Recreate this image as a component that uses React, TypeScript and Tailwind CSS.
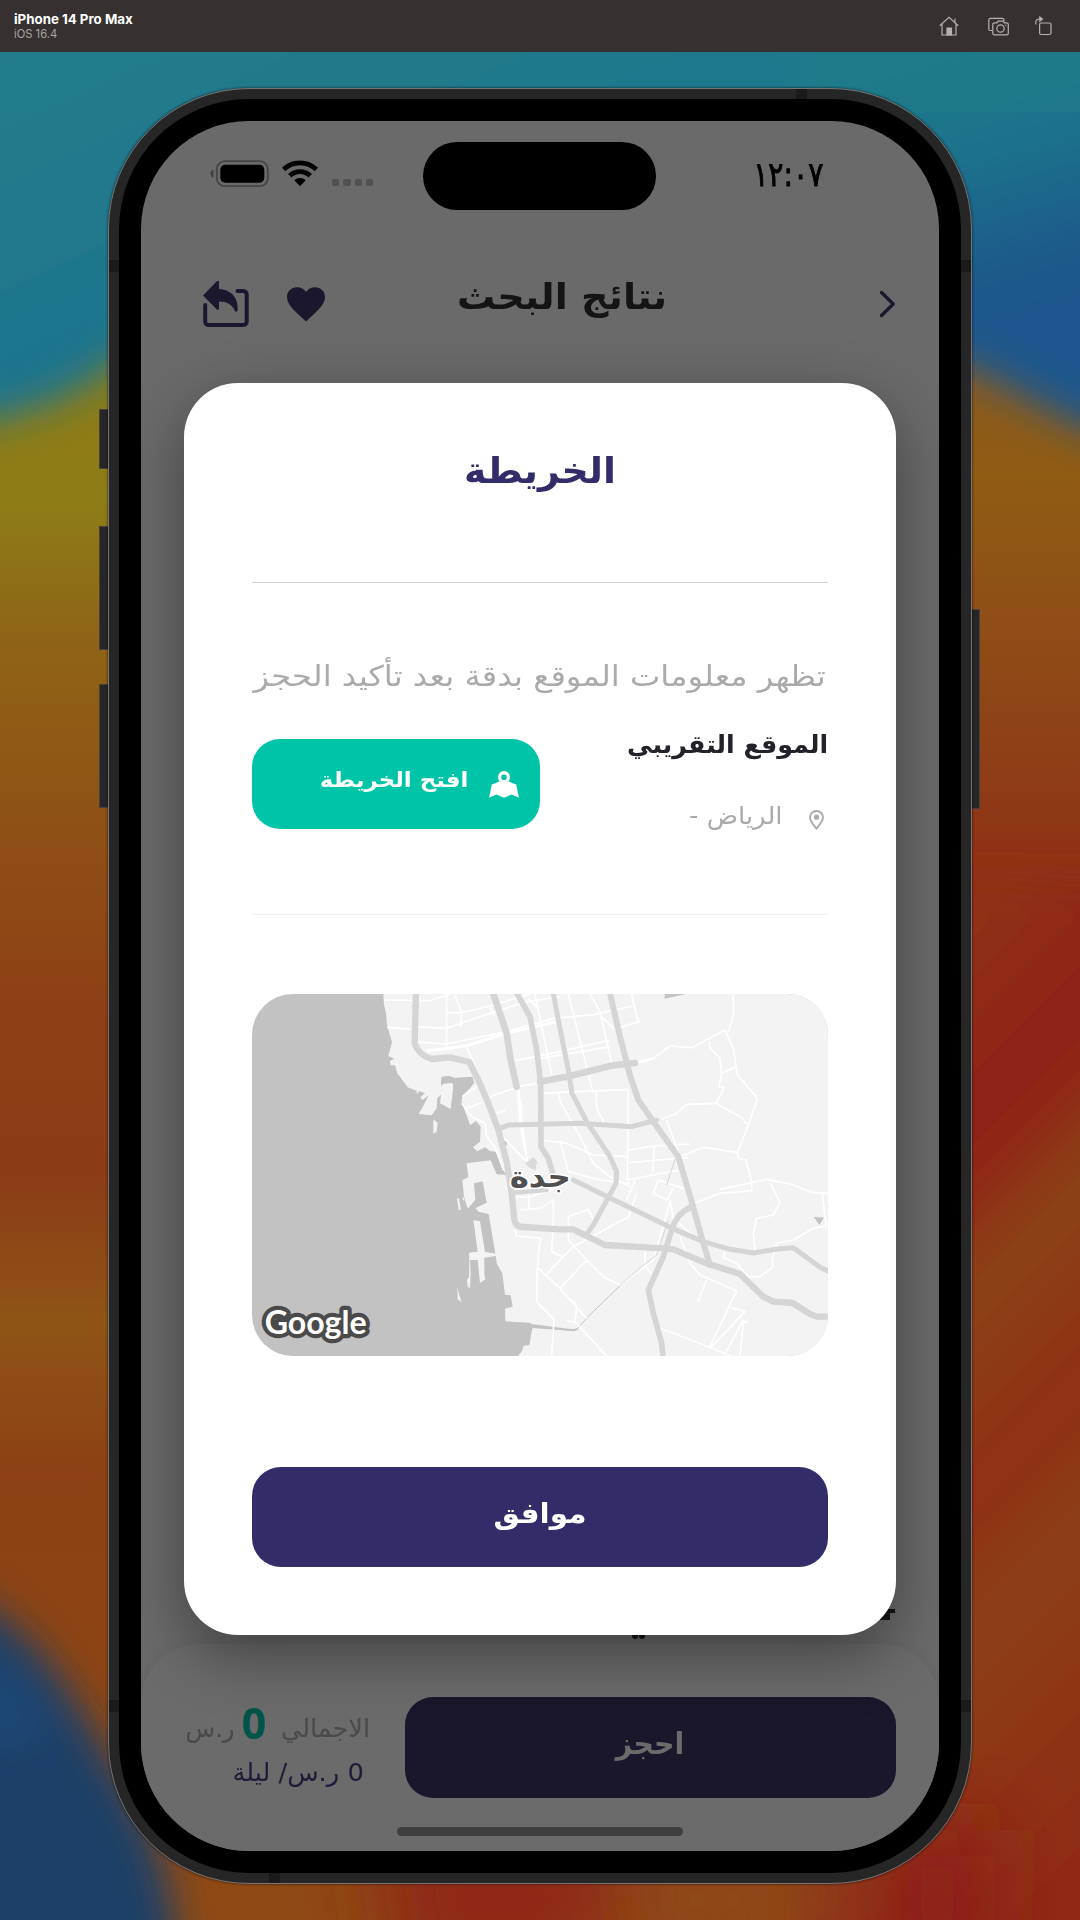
import React from "react";

function Wallpaper() {
  return (
    <svg className="absolute inset-0 h-full w-full" viewBox="0 52 1080 1868" preserveAspectRatio="none">
      <defs>
        <filter id="soft" x="-40%" y="-40%" width="180%" height="180%"><feGaussianBlur stdDeviation="40" /></filter>
        <filter id="mid" x="-30%" y="-30%" width="160%" height="160%"><feGaussianBlur stdDeviation="19" /></filter>
        <linearGradient id="base" x1="0" y1="0" x2="0" y2="1">
          <stop offset="0" stopColor="#8f7716" />
          <stop offset="0.24" stopColor="#8d7d17" />
          <stop offset="0.31" stopColor="#8f6516" />
          <stop offset="0.40" stopColor="#8f5316" />
          <stop offset="0.51" stopColor="#8e4015" />
          <stop offset="0.60" stopColor="#8b3c16" />
          <stop offset="0.68" stopColor="#8f5416" />
          <stop offset="0.76" stopColor="#8d4114" />
          <stop offset="1" stopColor="#8f4a14" />
        </linearGradient>
        <linearGradient id="right" gradientUnits="userSpaceOnUse" x1="0" y1="400" x2="0" y2="900">
          <stop offset="0" stopColor="#8c5b1c" />
          <stop offset="0.15" stopColor="#8f5c14" />
          <stop offset="0.4" stopColor="#8f5016" />
          <stop offset="0.7" stopColor="#8e4016" />
          <stop offset="0.9" stopColor="#8f3317" />
          <stop offset="1" stopColor="#8f3017" />
        </linearGradient>
        <linearGradient id="bands" gradientUnits="userSpaceOnUse" x1="1026" y1="880" x2="1561" y2="1415">
          <stop offset="0" stopColor="#8f3017" />
          <stop offset="0.17" stopColor="#8f2116" />
          <stop offset="0.24" stopColor="#8e2917" />
          <stop offset="0.33" stopColor="#8c4316" />
          <stop offset="0.40" stopColor="#8d3c16" />
          <stop offset="0.53" stopColor="#8f2e17" />
          <stop offset="0.65" stopColor="#8c4015" />
          <stop offset="0.80" stopColor="#8e3516" />
          <stop offset="0.98" stopColor="#8f2b17" />
        </linearGradient>
        <linearGradient id="sky" gradientUnits="userSpaceOnUse" x1="0" y1="0" x2="200" y2="440">
          <stop offset="0" stopColor="#267d8d" />
          <stop offset="0.5" stopColor="#20788d" />
          <stop offset="1" stopColor="#1b718f" />
        </linearGradient>
        <linearGradient id="skyRight" gradientUnits="userSpaceOnUse" x1="960" y1="60" x2="1040" y2="340">
          <stop offset="0" stopColor="#1c7a8b" />
          <stop offset="0.35" stopColor="#1d718b" />
          <stop offset="0.75" stopColor="#1b588b" />
          <stop offset="1" stopColor="#1b578c" />
        </linearGradient>
      </defs>
      <rect y="52" width="1080" height="1868" fill="url(#base)" />
      <rect x="540" y="300" width="540" height="1300" fill="url(#right)" />
      <rect x="780" y="880" width="400" height="1200" fill="url(#bands)" filter="url(#mid)" />
      <g filter="url(#soft)">
        <path d="M370 1820 L630 1820 L600 1980 L400 1980Z" fill="#8f2616" />
        <path d="M640 1820 L800 1820 L790 1980 L640 1980Z" fill="#8f4613" />
        <path d="M880 1830 L1000 1830 L990 1980 L880 1980Z" fill="#8f1f16" />
      </g>
      <g filter="url(#mid)">
        <path d="M-80 0 H900 V350 L500 300 L130 352 C85 390 50 415 -80 432Z" fill="url(#sky)" />
        <path d="M800 -60 H1160 V450 L1080 426 L970 368 L800 330Z" fill="url(#skyRight)" />
      </g>
      <rect y="52" width="1080" height="60" fill="#1f7b8c" opacity="0.5" />
      <g filter="url(#mid)">
        <path d="M-80 1582 C20 1600 65 1680 105 1750 C135 1800 175 1850 180 1980 H-80Z" fill="#1d4068" />
        <path d="M-80 1640 L30 1680 L50 1740 L-80 1760Z" fill="#1d4676" />
      </g>
    </svg>
  );
}

function TitleBar() {
  return (
    <header className="relative flex h-[52px] items-center justify-between bg-[#363130] pl-[14px] pr-[28px]">
      <div className="pt-[1px] font-['Inter']">
        <div className="text-[13.300px] font-bold leading-[15px] text-white">iPhone 14 Pro Max</div>
        <div className="text-[11.200px] leading-[14px] text-[#a9a6a5]">iOS 16.4</div>
      </div>
      <div className="flex items-center text-[#b5b2b1]">
        <svg className="h-[20px] w-[20px]" viewBox="0 0 20 20" fill="none" stroke="currentColor" strokeWidth="1.2">
          <path d="M.7 9.7 10 1.2l9.3 8.5M3 8v11h14V8M16 6.5V2.7" />
          <path d="M8 19v-7h4.500v7z" fill="currentColor" />
        </svg>
        <svg className="ml-[29px] h-[19px] w-[22px]" viewBox="0 0 22 19" fill="none" stroke="currentColor" strokeWidth="1.2">
          <path d="M4 13.500H2.200A1.500 1.500 0 0 1 .8 12V3A1.700 1.700 0 0 1 2.500 1.300h12A1.700 1.700 0 0 1 16 3v1" />
          <path d="M6.500 5.800h2.300l1.200-1.700h5.200l1.200 1.700h2.200a1.700 1.700 0 0 1 1.700 1.700v8.700a1.700 1.700 0 0 1-1.700 1.700H6.500a1.700 1.700 0 0 1-1.700-1.700V7.500a1.700 1.700 0 0 1 1.700-1.700z" />
          <circle cx="12.500" cy="11.500" r="3.700" />
          <path d="M17.300 8.300h1" />
        </svg>
        <svg className="ml-[25px] h-[20px] w-[17px]" viewBox="0 0 17 20" fill="none" stroke="currentColor" strokeWidth="1.200">
          <rect x="4.600" y="7" width="11.400" height="11.500" rx="1.500" />
          <path d="M.8 8.500V6.500Q.8 3 4.500 3" />
          <path d="M4.800 1v4.200L7.500 3z" fill="currentColor" />
        </svg>
      </div>
    </header>
  );
}

function StatusBar() {
  return (
    <div className="flex h-[89px] items-end pl-[69px]">
      <div className="mb-[22px] flex h-[28px] items-start">
        <svg className="h-[28px] w-[59px]" viewBox="0 0 59 28">
          <path d="M3.500 9.500v8.500Q.5 17 .5 13.800T3.500 9.500z" fill="#424242" />
          <rect x="6.800" y="1.200" width="51" height="25" rx="8" fill="none" stroke="#454545" strokeWidth="1.800" />
          <rect x="10.300" y="4.700" width="44" height="18" rx="5" fill="#000" />
        </svg>
        <svg className="ml-[13px] h-[27px] w-[36px]" viewBox="0 0 36 27">
          <path d="M18 0.500C25 .5 31.500 3.300 36 7.800L32.700 11.200C28.800 7.500 23.800 5.300 18 5.300S7.200 7.500 3.300 11.200L0 7.800C4.500 3.300 11 .5 18 .5z" />
          <path d="M18 9.200c4.600 0 8.800 1.800 11.900 4.800l-3.400 3.500C24.300 15.300 21.300 14 18 14s-6.300 1.300-8.500 3.500L6.100 14C9.200 11 13.400 9.200 18 9.200z" />
          <path d="M18 18c2.200 0 4.200.9 5.700 2.300L18 26.300l-5.700-6C13.800 18.900 15.800 18 18 18z" />
        </svg>
        <div className="ml-[14px] mt-[19px] flex gap-[4px]">
          <i className="h-[7px] w-[7.300px] rounded-[2px] bg-[#515151]" />
          <i className="h-[7px] w-[7.300px] rounded-[2px] bg-[#515151]" />
          <i className="h-[7px] w-[7.300px] rounded-[2px] bg-[#515151]" />
          <i className="h-[7px] w-[7.300px] rounded-[2px] bg-[#515151]" />
        </div>
      </div>
      <div className="ml-[50px] h-[68px] w-[233px] rounded-full bg-black" />
      <div dir="ltr" className="mb-[19px] ml-[98px] flex h-[34px] w-[68px] items-center justify-center text-[34px] leading-[34px] text-black">
        <bdo dir="ltr" className="inline-block scale-x-[0.83] whitespace-nowrap [-webkit-text-stroke:0.900px_#000]">١٢:٠٧</bdo>
      </div>
    </div>
  );
}

function AppBar() {
  return (
    <div className="mt-[71px] flex h-[46px] items-center pl-[62px] pr-[43px] text-[#1a172e]">
      <svg className="h-[46px] w-[46px]" viewBox="0 0 46 46">
        <path d="M2.200 24v16.500a3.500 3.500 0 0 0 3.500 3.500h34.500a3.500 3.500 0 0 0 3.500-3.500V13.500a3.500 3.500 0 0 0-3.500-3.500H34.500" fill="none" stroke="currentColor" strokeWidth="4" strokeLinecap="round" />
        <path d="M0 14.500 13.500.6C14.800-.3 16 0 16 1.500V8C28 8.300 36 17 34.500 29.800C33.800 31.500 32.200 31 31.600 29.500C29 23 23 20.300 16 20.600V27.500C15.900 29 14.800 29 13.700 28.200z" fill="currentColor" />
      </svg>
      <svg className="ml-[38px] h-[35px] w-[38px]" viewBox="0 0 38 35">
        <path d="M19 34.500C12 27.500 0 19 0 10.300C0 4 4.600.3 10 .3C14 .3 17 2.300 19 5C21 2.300 24 .3 28 .3C33.400 .3 38 4 38 10.300C38 19 26 27.500 19 34.500z" fill="currentColor" />
      </svg>
      <div className="mb-[14px] ml-[133px] w-[208px] scale-x-[1.06] whitespace-nowrap text-center text-[36px] font-bold leading-[46px] text-[#141416]">
        نتائج البحث
      </div>
      <svg className="ml-auto h-[28px] w-[17px]" viewBox="0 0 17 28" fill="none" stroke="currentColor" strokeWidth="3.300" strokeLinecap="round" strokeLinejoin="round">
        <path d="M2.500 2.500 14.300 14 2.500 25.500" />
      </svg>
    </div>
  );
}

function BottomSheet() {
  return (
    <div className="absolute inset-x-0 bottom-0 flex h-[207px] rounded-t-[58px] bg-[#6b6b6b] pl-[45px] pr-[43px] pt-[53px] shadow-[0_-2px_14px_rgba(0,0,0,0.06)]">
      <div dir="rtl" className="w-[184px]">
        <div className="flex h-[52px] items-center whitespace-nowrap text-[#4a4a4b]">
          <span className="mt-[11px] text-[25.500px]">الاجمالي</span>
          <span className="ml-[7px] mr-[15px] font-['Open_Sans'] text-[43px] font-bold leading-[52px] text-[#015548]">0</span>
          <span className="mt-[11px] origin-right scale-x-[0.950] text-[25.500px]">ر.س</span>
        </div>
        <div className="mt-[6px] origin-right scale-x-[1.030] whitespace-nowrap pr-[6px] text-[25px] leading-[36px] text-[#1f1b38]">0 ر.س/ ليلة</div>
      </div>
      <button className="ml-[35px] h-[101px] w-[491px] rounded-[28px] bg-[#1a172d] pb-[8px] text-[30px] font-bold text-[#6b6b6b]">
        <span className="inline-block scale-x-[0.950]">احجز</span>
      </button>
      <div className="absolute bottom-[15px] left-[256px] h-[9px] w-[286px] rounded-full bg-[#3f3f3f]" />
    </div>
  );
}

function CityMap() {
  return (
    <svg className="block h-[362px] w-[576px] shrink-0 rounded-[41px]" viewBox="36 42 1728 1086">
      <rect x="36" y="42" width="1728" height="1086" fill="#c2c2c2" />
      <g fill="#f3f3f3">
        <path d="M430 42 432 75 438 100 441 135 456 187 445 228 463 236 450 243 452 256 465 256 472 280 503 322 530 333 530 342 538 334 555 340 541 352 547 361 566 346 553 372 536 402 575 406 590 385 592 354 603 344 600 370 632 388 638 345 640 308 603 312 608 291 625 288 644 294 697 291 702 308 690 324 668 345 664 362 690 436 708 423 722 440 720 485 699 502 712 514 735 502 750 513 766 515 780 540 790 572 800 584 770 583 752 541 680 550 685 592 667 600 672 650 683 686 706 660 702 610 728 604 740 668 707 684 715 695 746 702 768 832 770 850 787 880 795 944 812 946 818 980 795 986 796 1024 868 1028 880 1034 874 1060 868 1095 850 1098 846 1114 834 1128 1764 1128 1764 42z" />
        <path d="M580 418 593 428 590 455 580 461zM651 655 657 655 663 690 656 690zM668 652 671 652 673 662 668 660zM700 720 720 724 735 816 773 822 772 827 733 833 733 884 736 898 720 909 713 840 690 840 692 880 690 925 683 920 681 900 687 890 688 842 687 818 713 815zM652 920 656 940 665 967 653 958z" />
      </g>
      <g fill="#c2c2c2">
        <path d="M604 291 625 288 644 294 697 291 702 308 690 324 668 345 664 362 668 385 680 410 690 436 640 440 600 420 603 372 632 388 638 345 640 312 620 303 603 318z" />
        <path d="M1274 42H1338L1274 56zM1721 711 1752 713 1738 734zM862 1036 878 1036 864 1080 858 1060zM782 480 800 485 800 497 790 495z" />
        <path d="M880 1033 960 1043 1000 1048 1010 1045 1016 1048 1002 1054 958 1050 878 1044z" />
      </g>
      <path d="M1012 1047 1044 1010 1140 917" fill="none" stroke="#c6c6c6" strokeWidth="3" />
      <path d="M845 540 856 550 880 532 892 545 885 572 865 560z" fill="#dadada" />
      <g fill="none" stroke="#fff" strokeWidth="5" strokeLinejoin="round">
        <path d="M432 60 570 62 630 42M530 140 620 145 720 110 860 65 960 50M441 142 510 147M620 42 620 200M645 45 665 98 662 140M620 97 665 98 750 78 870 42M530 186 620 192 800 155 940 115 1060 104 1180 78M750 80 762 110M680 203 715 280M825 242 960 215 1110 180M885 42 935 285M865 55 890 80M900 235 1110 200M985 42 1060 340M1080 105 1130 155M1050 42 1080 95 1115 250M1175 42 1190 110 1198 125 1140 142M900 340 1165 328 1162 600M955 340 960 365 1020 470 1060 550 1110 590 1170 620M1068 330 1070 385 1090 425M750 350 835 320 890 310M770 400 800 390M668 350 710 320M680 385 725 368" />
        <path d="M665 370 695 410 735 430 740 470 765 500 790 570M780 460 830 515 860 545M845 370 840 430 855 510M835 330 845 420 862 545M905 480 980 490 1060 525 1160 530M960 480 985 575 1080 600 1170 610M1165 510 1240 498 1350 492M1170 548 1250 540 1345 533M1243 500 1238 580M1160 600 1330 568M1280 420 1320 530" />
        <path d="M1190 248 1240 235 1290 198 1355 203 1455 150 1480 205 1492 285 1553 355 1525 435 1493 517 1495 535 1518 540 1535 605 1535 632 1440 640 1350 675M1480 42 1480 110 1465 155M1408 185 1410 205 1440 235 1445 280 1437 320 1452 323 1428 370 1340 373 1310 400 1265 418M1445 280 1485 262M1428 370 1500 410 1525 435M1320 530 1390 502 1493 517M1440 628 1580 598 1650 612 1720 638 1764 640M1590 608 1620 668 1600 705 1550 715 1540 760 1545 810M1747 640 1758 738 1720 745 1660 780 1610 790 1608 800 1597 835 1598 862 1560 890 1525 890 1490 850 1450 832 1455 815M1185 600 1160 660M1345 630 1255 600 1240 640 1280 660 1300 625M1290 660 1300 715 1385 790M1320 770 1350 850 1380 885 1490 932 1410 1100M1400 900 1373 965M1473 983 1515 995 1410 1105M1510 1025 1500 1128M1505 1022 1525 1028M1455 1122 1510 1020M1260 1045 1410 1102 1470 1128" />
        <path d="M830 650 870 652 960 620M840 690 900 685 940 660 940 720 935 815 970 830M865 640 868 688M825 750 830 768 900 775 892 860 890 965 942 1018 935 1128M892 862 960 925 1040 1015M920 883 960 840 1000 800 1110 740 1165 710 1190 640M985 710 1045 688 1060 720M985 710 985 780 1040 840 1090 890 1140 915M1040 840 960 925M1000 960 1010 980 1005 1025 1100 1128M980 1022 1015 1030M1140 915 1240 840 1290 665M1215 800 1215 860 1235 880" />
      </g>
      <g fill="none" stroke="#fff" strokeWidth="9"><path d="M560 213 680 197 800 160 960 122M835 330 842 430M1190 248 1240 235" /></g>
      <path d="M1306 535 1280 615M1285 720 1250 825 1205 860 1140 915" fill="none" stroke="#cfcfcf" strokeWidth="2.500" />
      <g fill="none" stroke="#d5d5d5" strokeWidth="15" strokeLinejoin="round" strokeLinecap="round">
        <path d="M528 30 524 190Q535 225 575 237L630 232 688 246 715 300 745 370 775 450 800 545 815 640 823 720Q828 742 850 741L960 748 1000 748 1095 795 1270 805 1300 808 1400 850 1500 882 1570 950 1600 965 1658 969 1710 1002 1730 1010 1764 1010" strokeWidth="19" />
        <path d="M756 30 800 160 812 240 830 320" strokeWidth="20" />
        <path d="M825 30 870 110 890 210 902 310 903 500 925 535 938 580" strokeWidth="17" />
        <path d="M938 30 955 120 985 270 996 340 1040 425 1110 530 1130 575 1128 610 1060 735 1045 755" />
        <path d="M1108 30 1135 150 1168 280 1195 360 1240 425 1315 530 1355 665 1390 790 1410 855" strokeWidth="18" />
        <path d="M900 305 980 290 1120 256 1185 249" strokeWidth="20" />
        <path d="M780 445 805 435 1020 430 1175 440 1250 420" />
        <path d="M1000 600 1105 652 1290 742 1390 785 1470 808 1540 819 1620 806 1660 803 1740 862 1770 876" />
        <path d="M1355 680Q1310 700 1295 750L1270 830 1225 930 1240 1000 1265 1090 1270 1140" strokeWidth="17" />
        <path d="M825 638 920 630" strokeWidth="13" />
      </g>
      <text x="901" y="620" textAnchor="middle" fontFamily="DejaVu Sans" fontWeight="bold" fontSize="88" fill="#4f4f4f" stroke="#fff" strokeWidth="9" strokeLinejoin="round" className="[paint-order:stroke]" textLength="184" lengthAdjust="spacingAndGlyphs">جدة</text>
      <text x="74" y="1061" direction="ltr" fontFamily="Lato" fontWeight="700" fontSize="96" fill="#fff" stroke="#4a4a4a" strokeWidth="25" strokeLinejoin="round" className="[paint-order:stroke]" textLength="306" lengthAdjust="spacingAndGlyphs">Google</text>
    </svg>
  );
}

function MapDialog() {
  return (
    <div dir="rtl" className="absolute left-[43px] top-[262px] flex h-[1252px] w-[712px] flex-col rounded-[54px] bg-white px-[68px] shadow-[0_20px_60px_rgba(0,0,0,0.38)]">
      <h1 className="mt-[62px] h-[52px] scale-x-[1.050] whitespace-nowrap text-center text-[36px] font-bold leading-[52px] text-[#322c68]">الخريطة</h1>
      <div className="mt-[85px] h-[1px] shrink-0 bg-[#cfcfcf]" />
      <p className="mt-[72px] h-[44px] origin-right scale-x-[1.130] whitespace-nowrap pr-[2px] text-[28.500px] leading-[44px] text-[#aaaaaa]">تظهر معلومات الموقع بدقة بعد تأكيد الحجز</p>
      <div className="mt-[16px] flex h-[120px] shrink-0 justify-between">
        <div>
          <h2 className="mt-[10px] h-[40px] origin-right scale-x-[1.010] whitespace-nowrap text-[25px] font-bold leading-[40px] text-[#23222a]">الموقع التقريبي</h2>
          <div className="mt-[31px] flex h-[40px] items-center text-[#aaaaaa]">
            <svg className="ml-[26px] mr-[4px] mt-[8px] h-[20px] w-[15px]" viewBox="0 0 15 20" fill="none" stroke="currentColor" strokeWidth="1.900">
              <path d="M7.500 18.500C4 14.500 1 11 1 7.200A6.400 6.400 0 0 1 7.500 1 6.400 6.400 0 0 1 14 7.200C14 11 11 14.500 7.500 18.500z" />
              <circle cx="7.500" cy="7.200" r="1.700" fill="currentColor" />
            </svg>
            <span className="origin-right scale-x-[1.080] whitespace-nowrap text-[24px]">الرياض -</span>
          </div>
        </div>
        <button className="mt-[24px] flex h-[90px] w-[288px] items-center rounded-[28px] bg-[#00c4a7] pr-[21px] text-white">
          <svg className="mt-[1px] h-[27px] w-[30px]" viewBox="0 0 30 27" fill="currentColor">
            <path fillRule="evenodd" d="M15 0a6 6 0 0 1 6 6c0 1.500-.6 3-1.500 4.500L27.200 13.500 30 26.700 22.500 23.500 15 26.700 7.500 23.500 0 26.700 2.800 13.500 10.500 10.500C9.600 9 9 7.500 9 6a6 6 0 0 1 6-6zm0 3.500a2.800 2.800 0 1 0 0 5.600 2.800 2.800 0 0 0 0-5.600z" />
          </svg>
          <span className="mb-[6px] mr-[21px] origin-right scale-x-[1.090] whitespace-nowrap text-[21px] font-bold">افتح الخريطة</span>
        </button>
      </div>
      <div className="mb-[79px] mt-[79px] h-[1px] shrink-0 bg-[#eeeeee]" />
      <CityMap />
      <button className="mt-[111px] h-[100px] w-[576px] shrink-0 rounded-[29px] bg-[#322c68] pb-[6px] text-[28px] font-bold text-white">
        <span className="inline-block scale-x-[1.055]">موافق</span>
      </button>
    </div>
  );
}

export default function App() {
  return (
    <div className="flex h-[1920px] w-[1080px] flex-col overflow-hidden font-['DejaVu_Sans',sans-serif]">
      <TitleBar />
      <main className="relative flex flex-1 justify-center pt-[36px]">
        <Wallpaper />
        <div className="relative h-[1796px] w-[864px]">
          <i className="absolute left-[-9px] top-[321px] h-[60px] w-[10px] border border-[#454140] bg-[#262626]" />
          <i className="absolute left-[-9px] top-[438px] h-[124px] w-[10px] border border-[#454140] bg-[#262626]" />
          <i className="absolute left-[-9px] top-[596px] h-[124px] w-[10px] border border-[#454140] bg-[#262626]" />
          <i className="absolute right-[-8px] top-[521px] h-[200px] w-[9px] border border-[#454140] bg-[#262626]" />
          <div className="relative h-full w-full rounded-[141px] border-[1.500px] border-[#777574] bg-[#262626] p-[10px] shadow-[0_0_2px_1px_rgba(0,0,0,0.35)]">
            <i className="absolute left-[687px] top-0 h-[11px] w-[11px] bg-[#1a1a1a]" />
            <i className="absolute bottom-0 left-[160px] h-[11px] w-[11px] bg-[#1a1a1a]" />
            <i className="absolute left-0 top-[171px] h-[12px] w-full bg-[#1a1a1a]" />
            <i className="absolute bottom-[171px] left-0 h-[12px] w-full bg-[#1a1a1a]" />
            <div className="relative h-full w-full rounded-[130px] bg-black p-[22px]">
              <div className="relative h-full w-full overflow-hidden rounded-[108px] bg-[#6a6a6a]">
                <StatusBar />
                <AppBar />
                <i className="absolute right-[44px] top-[1488px] h-[4px] w-[12px] bg-[#141416]" />
                <i className="absolute right-[49px] top-[1488px] h-[11px] w-[12px] bg-[#141416]" />
                <i className="absolute left-[491px] top-[1512px] h-[6px] w-[6px] rounded-full bg-[#141416]" />
                <i className="absolute left-[498px] top-[1512px] h-[6px] w-[6px] rounded-full bg-[#141416]" />
                <BottomSheet />
                <MapDialog />
              </div>
            </div>
          </div>
        </div>
      </main>
    </div>
  );
}
